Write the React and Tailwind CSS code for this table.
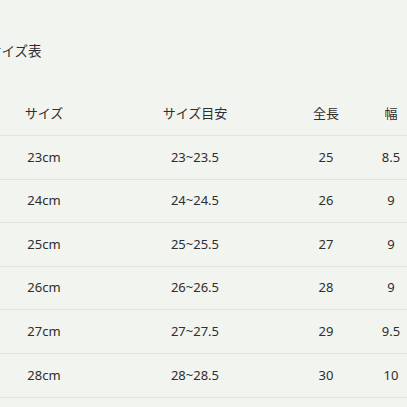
import React from 'react';

const rows = [
  ['23cm', '23~23.5', '25', '8.5'],
  ['24cm', '24~24.5', '26', '9'],
  ['25cm', '25~25.5', '27', '9'],
  ['26cm', '26~26.5', '28', '9'],
  ['27cm', '27~27.5', '29', '9.5'],
  ['28cm', '28~28.5', '30', '10'],
];

const cols = 'grid grid-cols-[112px_190px_72px_58px] items-center text-center';

export default function App() {
  return (
    <div
      className="w-full h-screen overflow-hidden bg-[#f2f4ef] text-[#2e2e2e]"
      style={{ fontFamily: '"Noto Sans", "Noto Sans CJK JP", sans-serif' }}
    >
      <div className="-ml-[12px] w-[432px] pt-[40px]">
        <h2 className="text-[13.5px] leading-[22px] font-normal">サイズ表</h2>

        <div className="mt-[30px] text-[13px]">
          <div className={`${cols} h-[44px] border-b border-[#e2e5de]`}>
            <div>サイズ</div>
            <div>サイズ目安</div>
            <div>全長</div>
            <div>幅</div>
          </div>
          {rows.map((r) => (
            <div key={r[0]} className={`${cols} h-[43.6px] border-b border-[#e2e5de]`}>
              {r.map((c, i) => (
                <div key={i}>{c}</div>
              ))}
            </div>
          ))}
        </div>
      </div>
    </div>
  );
}
